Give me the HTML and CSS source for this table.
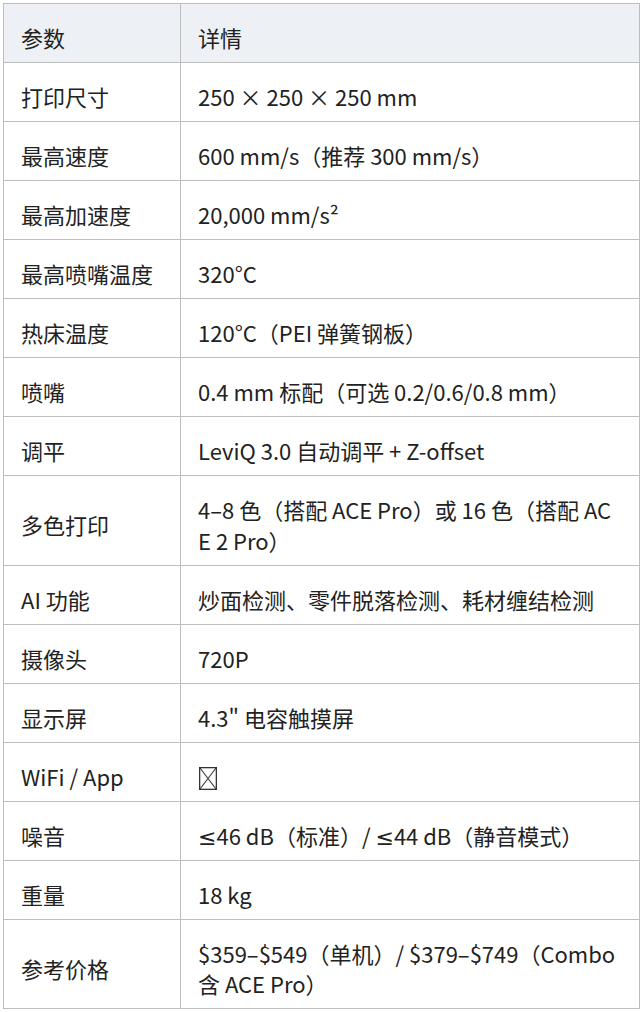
FILE: index.html
```html
<!DOCTYPE html>
<html lang="zh-CN">
<head>
<meta charset="utf-8">
<title>参数</title>
<link rel="stylesheet" href="styles.css">
</head>
<body>
<table class="spec">
  <thead>
    <tr><th class="key">参数</th><th>详情</th></tr>
  </thead>
  <tbody>
    <tr><td class="key">打印尺寸</td><td>250 × 250 × 250 mm</td></tr>
    <tr><td class="key">最高速度</td><td>600 mm/s（推荐 300 mm/s）</td></tr>
    <tr><td class="key">最高加速度</td><td>20,000 mm/s²</td></tr>
    <tr><td class="key">最高喷嘴温度</td><td>320°C</td></tr>
    <tr><td class="key">热床温度</td><td>120°C（PEI 弹簧钢板）</td></tr>
    <tr><td class="key">喷嘴</td><td>0.4 mm 标配（可选 0.2/0.6/0.8 mm）</td></tr>
    <tr><td class="key">调平</td><td>LeviQ 3.0 自动调平 + Z-offset</td></tr>
    <tr><td class="key">多色打印</td><td>4–8 色（搭配 ACE Pro）或 16 色（搭配 ACE 2 Pro）</td></tr>
    <tr><td class="key">AI 功能</td><td>炒面检测、零件脱落检测、耗材缠结检测</td></tr>
    <tr><td class="key">摄像头</td><td>720P</td></tr>
    <tr><td class="key">显示屏</td><td>4.3" 电容触摸屏</td></tr>
    <tr><td class="key">WiFi / App</td><td><svg class="box" width="18" height="23" viewBox="0 0 18 23" aria-label="☒"><rect x="0.65" y="0.65" width="16.7" height="21.7" fill="none" stroke="#333" stroke-width="1.3"/><path d="M1 1 L17 22 M17 1 L1 22" stroke="#333" stroke-width="1.1" fill="none"/></svg></td></tr>
    <tr><td class="key">噪音</td><td><span class="sym">≤</span>46 dB（标准）/ <span class="sym">≤</span>44 dB（静音模式）</td></tr>
    <tr><td class="key">重量</td><td>18 kg</td></tr>
    <tr><td class="key">参考价格</td><td>$359–$549（单机）/ $379–$749（Combo 含 ACE Pro）</td></tr>
  </tbody>
</table>
</body>
</html>
```

FILE: styles.css
```css
html, body {
  margin: 0;
  padding: 0;
  background: #ffffff;
}

body {
  padding: 3px 2px 0 3px;
  font-family: "Noto Sans CJK SC", "Noto Sans", sans-serif;
  font-size: 22px;
  color: #222222;
}

.spec {
  width: 637px;
  border-collapse: collapse;
  table-layout: fixed;
}

.spec th,
.spec td {
  border: 1px solid #bdbdbd;
  padding: 18px 17px 9.5px 17px;
  line-height: 30.5px;
  height: 30.5px;
  text-align: left;
  vertical-align: middle;
  font-weight: 400;
  word-break: break-all;
}

.spec th.key,
.spec td.key {
  width: 142px;
}

.spec thead th {
  background: #edf0f5;
}

.box {
  display: inline-block;
  vertical-align: -4px;
  margin-left: 1px;
}

.sym {
  font-family: "DejaVu Sans", sans-serif;
  font-size: 22px;
  line-height: 0;
}
```
